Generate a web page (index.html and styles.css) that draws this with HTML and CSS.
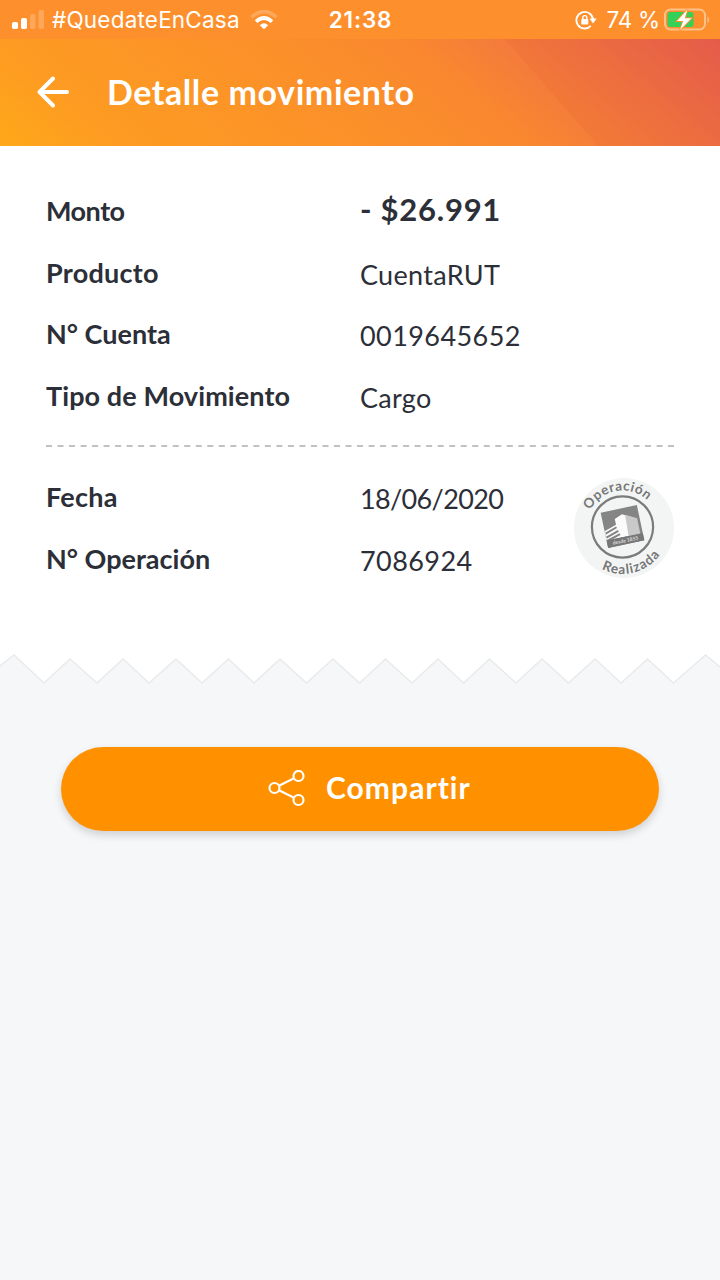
FILE: index.html
```html
<!DOCTYPE html>
<html lang="es">
<head>
<meta charset="utf-8">
<title>Detalle movimiento</title>
<link rel="stylesheet" href="styles.css">
</head>
<body>
<div class="status">
  <div class="status-left">
    <svg class="signal" width="32" height="20" viewBox="0 0 32 20" fill="#fff">
      <rect x="0" y="12" width="6" height="7" rx="1.8"/>
      <rect x="9" y="8" width="6" height="11" rx="1.8"/>
      <rect x="18" y="4" width="5.500" height="15" rx="1.8" opacity=".22"/>
      <rect x="26.500" y="0" width="5.500" height="19" rx="1.8" opacity=".22"/>
    </svg>
    <span class="carrier">#QuedateEnCasa</span>
    <svg class="wifi" width="28" height="20" viewBox="0 0 28 20" fill="none" stroke="#fff" stroke-width="3.600">
      <path d="M1.500 7.300Q14-4.200 26.500 7.300" opacity=".22"/>
      <path d="M6 11.600Q14 4.400 22 11.600"/>
      <path d="M9.800 15.200Q14 11.400 18.200 15.200L14 19.300z" fill="#fff" stroke="none"/>
    </svg>
  </div>
  <time class="clock">21:38</time>
  <div class="status-right">
    <svg class="lock" width="22" height="20" viewBox="0 0 22 20" fill="none" stroke="#fff" stroke-width="1.900">
      <path d="M18 9.500A8.300 8.300 0 1 0 15.800 15.900"/>
      <path d="M14.500 8.600h7.200l-3.600 4.800z" fill="#fff" stroke="none"/>
      <rect x="6.300" y="9" width="7" height="5.600" rx=".8" fill="#fff" stroke="none"/>
      <path d="M7.800 9.500V7.600a2 2 0 0 1 4 0v1.900" stroke-width="1.400"/>
    </svg>
    <span class="percent">74 %</span>
    <svg class="battery" width="46" height="24" viewBox="0 0 46 24">
      <rect x="1" y="1.500" width="40" height="20" rx="5.500" fill="none" stroke="#fff" stroke-width="2" opacity=".45"/>
      <path d="M43.500 8.500c2 .8 2 5.500 0 6.500z" fill="#fff" opacity=".45"/>
      <rect x="3.500" y="4" width="26" height="15" rx="3" fill="#34d058"/>
      <path d="M23.500 1.500L13 13h6.200l-3.200 9L27.500 10.200h-6.700z" fill="#fff" stroke="#fd902b" stroke-width="1.800" paint-order="stroke"/>
    </svg>
  </div>
</div>
<header class="header">
  <svg class="back" width="34" height="34" viewBox="0 0 34 34" fill="none" stroke="#fff" stroke-width="4" stroke-linecap="round" stroke-linejoin="round">
    <path d="M31 17H4M17 3.500L3.500 17L17 30.500"/>
  </svg>
  <h1 class="title">Detalle movimiento</h1>
</header>
<main class="receipt">
  <dl class="rows">
    <dt class="l-monto">Monto</dt><dd class="amount">- $26.991</dd>
    <dt class="l-producto">Producto</dt><dd class="v-text">CuentaRUT</dd>
    <dt>N° Cuenta</dt><dd class="v-digits">0019645652</dd>
    <dt class="l-tipo">Tipo de Movimiento</dt><dd class="v-text">Cargo</dd>
  </dl>
  <svg class="divider" width="628" height="2" viewBox="0 0 628 2"><path d="M0 1H628" stroke="#bfc1c3" stroke-width="2" stroke-dasharray="6 5.520"/></svg>
  <div class="bottom">
    <dl class="rows">
      <dt class="l-producto">Fecha</dt><dd class="v-date">18/06/2020</dd>
      <dt>N° Operación</dt><dd class="v-digits">7086924</dd>
    </dl>
    <svg class="stamp" width="100" height="100" viewBox="0 0 100 100">
      <circle cx="50" cy="50" r="50" fill="#f3f5f5"/>
      <circle cx="48.500" cy="49" r="30.600" fill="none" stroke="#7b7b7b" stroke-width="2.200"/>
      <path id="arc-top" d="M12 49a36.500 36.500 0 0 1 73 0" fill="none"/>
      <path id="arc-bottom" d="M2.500 50a46 46 0 0 0 92 0" fill="none"/>
      <text class="stamp-text"><textPath href="#arc-top" startOffset="44.500%" text-anchor="middle" textLength="67">Operación</textPath></text>
      <text class="stamp-text"><textPath href="#arc-bottom" startOffset="57.500%" text-anchor="middle" textLength="65">Realizada</textPath></text>
      <g transform="translate(48.500 48.500) rotate(-12)">
        <rect x="-18.500" y="-18" width="37" height="36" fill="#858585"/>
        <path d="M-18.500 1L-6 -3V-9L2-12L15-5V10.500H-18.500z" fill="#fbfbfb"/>
        <path d="M5-11L16-5V10.500H4z" fill="#c9c9c9"/>
        <path d="M-18 3.500L-6-.5M-18 7.500L-5 3.500M-18 11L-4 7" stroke="#858585" stroke-width="2"/>
        <rect x="-18.500" y="10.500" width="37" height="7.500" fill="#777"/>
        <text class="stamp-small" x="0" y="16" text-anchor="middle">desde 1855</text>
      </g>
    </svg>
  </div>
</main>
<svg class="tear" width="720" height="34" viewBox="0 0 720 34">
  <path d="M0 0V16L14 5L44 33L70 9L97 33L123 9L149 33L176 9L202 33L228.500 9L254 33L280 9L306.500 33L333 9L359.500 33L385.500 9L412 33L438 9L463.500 33L489.500 9L516 33L542 9L568.500 33L595 9L621 33L647.500 9L673.500 33L705.500 5L720 17V0z" fill="#fff"/>
  <path d="M0 16L14 5L44 33L70 9L97 33L123 9L149 33L176 9L202 33L228.500 9L254 33L280 9L306.500 33L333 9L359.500 33L385.500 9L412 33L438 9L463.500 33L489.500 9L516 33L542 9L568.500 33L595 9L621 33L647.500 9L673.500 33L705.500 5L720 17" fill="none" stroke="#e8eaec" stroke-width="1.500"/>
</svg>
<button class="share">
  <svg width="38" height="38" viewBox="0 0 38 38" fill="none" stroke="#fff" stroke-width="2.200">
    <circle cx="6.500" cy="18" r="5"/><circle cx="30.500" cy="6" r="5"/><circle cx="30.500" cy="30" r="5"/>
    <path d="M11 15.700L26 8.200M11 20.300L26 27.800"/>
  </svg>
  <span class="share-label">Compartir</span>
</button>
</body>
</html>
```
FILE: styles.css
```css
* { box-sizing: border-box; }
body {
  margin: 0;
  width: 720px;
  min-height: 1280px;
  background: #f5f7f9;
  font-family: Lato, sans-serif;
  font-variant-ligatures: none;
  color: #2c2f38;
}
.status {
  display: grid;
  grid-template-columns: 1fr auto 1fr;
  align-items: center;
  height: 39px;
  padding: 0 10px 0 12px;
  background: #fd8f2c;
  color: #fff;
  font-family: Inter, sans-serif;
  font-size: 22.5px;
}
.status-left, .status-right { display: flex; align-items: center; }
.status-right { justify-content: flex-end; }
.carrier { margin: 0 10px 0 8px; letter-spacing: .2px; }
.clock { margin-right: 1px; font-weight: 600; letter-spacing: .8px; }
.percent { margin: 0 4px 0 10px; letter-spacing: -.2px; }
.lock { margin-right: -1px; }
.header {
  position: relative;
  display: flex;
  align-items: center;
  gap: 37px;
  height: 107px;
  padding-left: 36px;
  background: linear-gradient(40deg, #ffa819 0%, #fd9b22 15%, #fb8f2a 48%, #f9872f 63%, #f47b3c 74%, #e65c50 100%);
  color: #fff;
}
.header::before {
  content: "";
  position: absolute;
  inset: 0;
  background: rgba(226, 90, 40, .12);
  clip-path: polygon(505px 0, 100% 0, 100% 100%, 598px 100%);
}
.back { margin-top: -2px; }
.title { margin: -2px 0 0; font-size: 34px; font-weight: 700; letter-spacing: .58px; }
.receipt { height: 504px; padding: 34px 46px 0; background: #fff; }
.rows {
  display: grid;
  grid-template-columns: 314px auto;
  grid-auto-rows: 61.5px;
  align-items: center;
  margin: 0;
  font-size: 27px;
  white-space: nowrap;
}
.rows dt { font-weight: 700; }
.rows dd { margin: 0; padding-top: 4px; }
.rows .amount { padding: 0 0 3px; font-size: 31px; font-weight: 700; letter-spacing: .75px; }
.l-monto { letter-spacing: -.5px; }
.l-producto { letter-spacing: .25px; }
.l-tipo { letter-spacing: .1px; }
.v-text { letter-spacing: .3px; }
.v-digits { letter-spacing: .42px; }
.v-date { letter-spacing: -.65px; }
.divider { display: block; margin: 19px 0; }
.bottom { display: flex; justify-content: space-between; }
.stamp { margin-top: 12px; overflow: visible; }
.stamp-text { font-size: 13.5px; font-weight: 700; fill: #777; }
.stamp-small { font-size: 5px; font-weight: 700; fill: #ddd; }
.tear { display: block; }
.share {
  display: flex;
  align-items: center;
  gap: 20px;
  width: 598px;
  height: 84px;
  margin: 63px 0 0 61px;
  padding: 0 0 0 207px;
  border: 0;
  border-radius: 42px;
  background: #ff9100;
  box-shadow: 0 4px 8px rgba(0, 0, 0, .16);
  color: #fff;
  font: 700 30px Lato, sans-serif;
  font-variant-ligatures: none;
}
.share-label { padding-bottom: 5px; letter-spacing: 1.05px; }
```
